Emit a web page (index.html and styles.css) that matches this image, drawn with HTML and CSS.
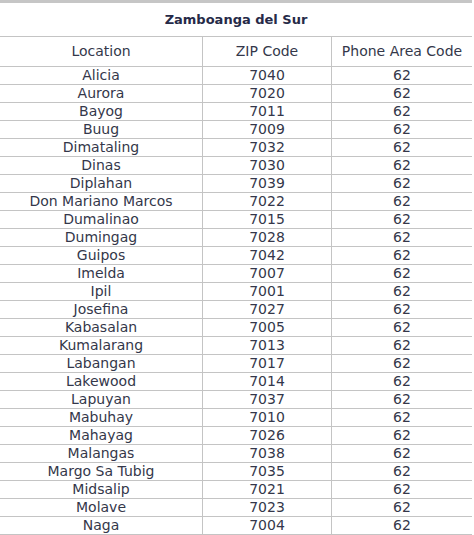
FILE: index.html
```html
<!DOCTYPE html>
<html lang="en">
<head>
<meta charset="utf-8">
<title>Zamboanga del Sur ZIP Codes</title>
<link rel="stylesheet" href="styles.css">
</head>
<body>
<table class="zip-table">
  <colgroup>
    <col class="col-loc">
    <col class="col-zip">
    <col class="col-phone">
  </colgroup>
  <thead>
    <tr><th class="title" colspan="3">Zamboanga del Sur</th></tr>
    <tr class="head"><th>Location</th><th class="sep">ZIP Code</th><th class="sep">Phone Area Code</th></tr>
  </thead>
  <tbody>
    <tr><td>Alicia</td><td class="sep">7040</td><td class="sep">62</td></tr>
    <tr><td>Aurora</td><td class="sep">7020</td><td class="sep">62</td></tr>
    <tr><td>Bayog</td><td class="sep">7011</td><td class="sep">62</td></tr>
    <tr><td>Buug</td><td class="sep">7009</td><td class="sep">62</td></tr>
    <tr><td>Dimataling</td><td class="sep">7032</td><td class="sep">62</td></tr>
    <tr><td>Dinas</td><td class="sep">7030</td><td class="sep">62</td></tr>
    <tr><td>Diplahan</td><td class="sep">7039</td><td class="sep">62</td></tr>
    <tr><td>Don Mariano Marcos</td><td class="sep">7022</td><td class="sep">62</td></tr>
    <tr><td>Dumalinao</td><td class="sep">7015</td><td class="sep">62</td></tr>
    <tr><td>Dumingag</td><td class="sep">7028</td><td class="sep">62</td></tr>
    <tr><td>Guipos</td><td class="sep">7042</td><td class="sep">62</td></tr>
    <tr><td>Imelda</td><td class="sep">7007</td><td class="sep">62</td></tr>
    <tr><td>Ipil</td><td class="sep">7001</td><td class="sep">62</td></tr>
    <tr><td>Josefina</td><td class="sep">7027</td><td class="sep">62</td></tr>
    <tr><td>Kabasalan</td><td class="sep">7005</td><td class="sep">62</td></tr>
    <tr><td>Kumalarang</td><td class="sep">7013</td><td class="sep">62</td></tr>
    <tr><td>Labangan</td><td class="sep">7017</td><td class="sep">62</td></tr>
    <tr><td>Lakewood</td><td class="sep">7014</td><td class="sep">62</td></tr>
    <tr><td>Lapuyan</td><td class="sep">7037</td><td class="sep">62</td></tr>
    <tr><td>Mabuhay</td><td class="sep">7010</td><td class="sep">62</td></tr>
    <tr><td>Mahayag</td><td class="sep">7026</td><td class="sep">62</td></tr>
    <tr><td>Malangas</td><td class="sep">7038</td><td class="sep">62</td></tr>
    <tr><td>Margo Sa Tubig</td><td class="sep">7035</td><td class="sep">62</td></tr>
    <tr><td>Midsalip</td><td class="sep">7021</td><td class="sep">62</td></tr>
    <tr><td>Molave</td><td class="sep">7023</td><td class="sep">62</td></tr>
    <tr><td>Naga</td><td class="sep">7004</td><td class="sep">62</td></tr>
  </tbody>
</table>
</body>
</html>
```
FILE: styles.css
```css
html, body {
  margin: 0;
  padding: 0;
  background: #ffffff;
}

body {
  font-family: "DejaVu Sans", Verdana, sans-serif;
  color: #34374a;
}

.zip-table {
  width: 472px;
  table-layout: fixed;
  border-collapse: separate;
  border-spacing: 0;
  border-top: 3px solid #c6c6c6;
  font-size: 14px;
}

.col-loc { width: 202px; }
.col-zip { width: 129px; }
.col-phone { width: 141px; }

.zip-table th,
.zip-table td {
  padding: 0;
  text-align: center;
  font-weight: normal;
  border-bottom: 1px solid #c4c4c4;
  white-space: nowrap;
}

.zip-table .sep {
  border-left: 1px solid #c4c4c4;
}

.zip-table .title {
  font-size: 13px;
  font-weight: bold;
  color: #262a48;
  line-height: 33px;
}

.zip-table .head th {
  line-height: 29px;
}

.zip-table td {
  line-height: 17px;
}
```
